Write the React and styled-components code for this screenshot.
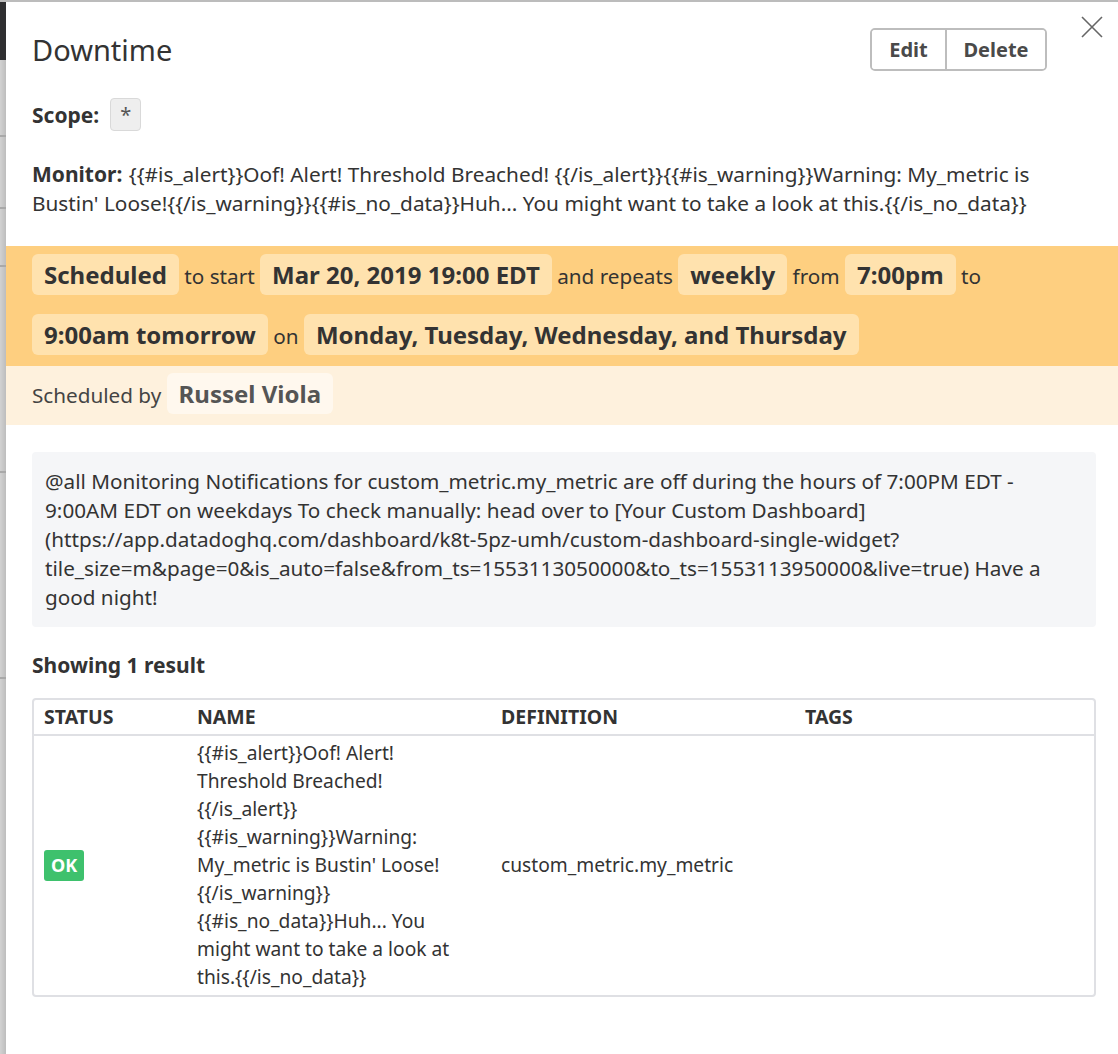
import React from "react";
import styled, { createGlobalStyle } from "styled-components";

const GlobalStyle = createGlobalStyle`
  html, body { margin: 0; padding: 0; background: #fff; }
  body { font-family: "Noto Sans", "Open Sans", sans-serif; color: #333; }
  * { box-sizing: border-box; }
`;

const Page = styled.div`
  display: flex;
  min-height: 1054px;
  border-top: 2px solid #bcbcbc;
`;

const Backdrop = styled.div`
  width: 6px;
  flex: none;
  display: flex;
  flex-direction: column;
  background: linear-gradient(to right, #d2d2d2, #bdbdbd);
`;

const BackSeg = styled.div`
  height: ${(p) => p.$h}px;
  flex: none;
  background: ${(p) => (p.$dark ? "#2f2f31" : "transparent")};
  border-bottom: ${(p) => (p.$line ? "2px solid #a9a9a9" : "none")};
`;

const Modal = styled.div`
  flex: 1;
  position: relative;
  padding-top: 26px;
  padding-bottom: 40px;
`;

const Section = styled.div`
  padding: 0 22px 0 26px;
`;

const Header = styled.div`
  display: flex;
  align-items: center;
  justify-content: space-between;
  padding-right: 49px;
`;

const Title = styled.h1`
  margin: 0;
  font-size: 29px;
  font-weight: 400;
  color: #333;
  line-height: 43px;
`;

const ButtonGroup = styled.div`
  display: flex;
  border: 2px solid #bdbdbd;
  border-radius: 5px;
  height: 43px;
  overflow: hidden;
`;

const GroupButton = styled.button`
  font-family: inherit;
  font-size: 20px;
  font-weight: 700;
  color: #4a4a4a;
  background: #fff;
  border: none;
  border-left: ${(p) => (p.$divider ? "2px solid #bdbdbd" : "none")};
  width: ${(p) => p.$w}px;
  padding: 0;
  cursor: pointer;
`;

const CloseButton = styled.button`
  position: absolute;
  top: 13px;
  right: 14px;
  width: 24px;
  height: 24px;
  padding: 0;
  border: none;
  background: none;
  display: flex;
  align-items: center;
  justify-content: center;
  cursor: pointer;
`;

const ScopeRow = styled.div`
  display: flex;
  align-items: center;
  gap: 10px;
  margin-top: 27px;
  font-size: 20px;
`;

const Label = styled.span`
  font-weight: 700;
  font-size: 21px;
  color: #333;
  margin-right: 1px;
`;

const ScopeChip = styled.span`
  display: inline-flex;
  align-items: center;
  height: 33px;
  padding: 0 9px;
  background: #eeeeee;
  border: 1px solid #d9d9d9;
  border-radius: 4px;
  color: #555;
  font-size: 20px;
`;

const MonitorText = styled.p`
  margin: 29px 0 0;
  font-size: 20.8px;
  line-height: 29px;
  color: #333;
`;

const ScheduleBand = styled.div`
  margin-top: 28px;
  background: #fecf80;
  padding: 0 22px 0 26px;
  font-size: 20.7px;
  line-height: 60px;
  color: #333;
`;

const ByBand = styled.div`
  background: #fef1dd;
  padding: 0 22px 0 26px;
  font-size: 20.7px;
  line-height: 59px;
  color: #444;
`;

const Chip = styled.span`
  display: inline-block;
  line-height: 41px;
  padding: 0 12px;
  border-radius: 6px;
  background: ${(p) => (p.$light ? "#fff8ee" : "#ffe2ae")};
  color: ${(p) => (p.$light ? "#555" : "#333")};
  font-weight: 700;
  font-size: 24px;
  vertical-align: baseline;
`;

const Note = styled.div`
  margin-top: 27px;
  background: #f5f6f8;
  border-radius: 4px;
  padding: 15px 14px 15px 13px;
  font-size: 20.7px;
  line-height: 29px;
  color: #333;
  word-wrap: break-word;
`;

const ResultsTitle = styled.div`
  margin-top: 24px;
  font-size: 21px;
  font-weight: 700;
  line-height: 29px;
`;

const Table = styled.table`
  margin-top: 18px;
  width: 100%;
  border-collapse: separate;
  border-spacing: 0;
  border: 2px solid #dfe0e4;
  border-radius: 4px;
  table-layout: fixed;
`;

const Th = styled.th`
  text-align: left;
  font-size: 19.5px;
  font-weight: 700;
  color: #333;
  padding: 4px 10px 5px;
  line-height: 25px;
  border-bottom: 2px solid #dfe0e4;
  width: ${(p) => (p.$w ? `${p.$w}px` : "auto")};
`;

const Td = styled.td`
  font-size: 19.2px;
  line-height: 28px;
  color: #333;
  padding: 3px 10px 4px;
  vertical-align: middle;
`;

const OkBadge = styled.span`
  display: inline-block;
  background: #3ec16d;
  color: #fff;
  font-weight: 700;
  font-size: 18px;
  line-height: 31px;
  padding: 0 7px;
  border-radius: 3px;
`;

const backSegments = [
  { h: 58, dark: true },
  { h: 77, line: true },
  { h: 72, line: true },
  { h: 58, line: true },
  { h: 206, line: true },
  { h: 206, line: true },
];

export default function App() {
  const monitorName =
    "{{#is_alert}}Oof! Alert! Threshold Breached! {{/is_alert}}{{#is_warning}}Warning: My_metric is Bustin' Loose!{{/is_warning}}{{#is_no_data}}Huh... You might want to take a look at this.{{/is_no_data}}";
  return (
    <>
      <GlobalStyle />
      <Page>
        <Backdrop>
          {backSegments.map((s, i) => (
            <BackSeg key={i} $h={s.h} $dark={s.dark} $line={s.line} />
          ))}
        </Backdrop>
        <Modal>
          <CloseButton aria-label="Close">
            <svg width="22" height="22" viewBox="0 0 22 22">
              <path d="M1 1 L21 21 M21 1 L1 21" stroke="#666" strokeWidth="1.6" fill="none" />
            </svg>
          </CloseButton>
          <Section>
            <Header>
              <Title>Downtime</Title>
              <ButtonGroup>
                <GroupButton $w={73}>Edit</GroupButton>
                <GroupButton $divider $w={100}>Delete</GroupButton>
              </ButtonGroup>
            </Header>
            <ScopeRow>
              <Label>Scope:</Label>
              <ScopeChip>*</ScopeChip>
            </ScopeRow>
            <MonitorText>
              <Label>Monitor:</Label> {monitorName}
            </MonitorText>
          </Section>
          <ScheduleBand>
            <Chip>Scheduled</Chip> to start <Chip>Mar 20, 2019 19:00 EDT</Chip> and repeats{" "}
            <Chip>weekly</Chip> from <Chip>7:00pm</Chip> to <Chip>9:00am tomorrow</Chip> on{" "}
            <Chip>Monday, Tuesday, Wednesday, and Thursday</Chip>
          </ScheduleBand>
          <ByBand>
            Scheduled by <Chip $light>Russel Viola</Chip>
          </ByBand>
          <Section>
            <Note>
              @all Monitoring Notifications for custom_metric.my_metric are off during the hours of 7:00PM EDT -
              9:00AM EDT on weekdays To check manually: head over to [Your Custom Dashboard]
              (https://app.datadoghq.com/dashboard/k8t-5pz-umh/custom-dashboard-single-widget?
              tile_size=m&amp;page=0&amp;is_auto=false&amp;from_ts=1553113050000&amp;to_ts=1553113950000&amp;live=true)
              Have a good night!
            </Note>
            <ResultsTitle>Showing 1 result</ResultsTitle>
            <Table>
              <thead>
                <tr>
                  <Th $w={153}>STATUS</Th>
                  <Th $w={304}>NAME</Th>
                  <Th $w={304}>DEFINITION</Th>
                  <Th>TAGS</Th>
                </tr>
              </thead>
              <tbody>
                <tr>
                  <Td>
                    <OkBadge>OK</OkBadge>
                  </Td>
                  <Td>{monitorName}</Td>
                  <Td>custom_metric.my_metric</Td>
                  <Td />
                </tr>
              </tbody>
            </Table>
          </Section>
        </Modal>
      </Page>
    </>
  );
}
